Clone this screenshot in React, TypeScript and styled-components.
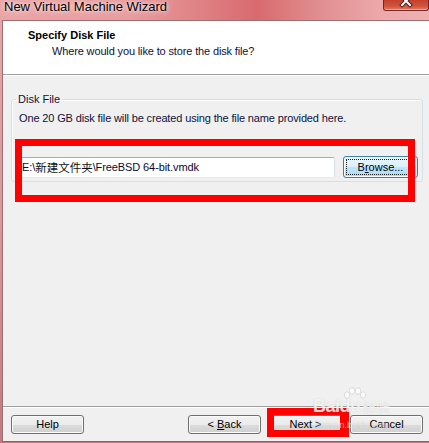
import React from "react";
import styled, { createGlobalStyle } from "styled-components";

const UI = `"Liberation Sans", "Noto Sans CJK SC", Arial, sans-serif`;

const Global = createGlobalStyle`
  html, body { margin: 0; padding: 0; background: #fff; }
  body { font-family: ${UI}; }
  * { box-sizing: border-box; }
`;

const Window = styled.div`
  position: relative;
  width: 429px;
  height: 443px;
  display: flex;
  flex-direction: column;
  padding-bottom: 1px;
  background: linear-gradient(180deg, #e9a6a8 0%, #dc979a 50%, #c27a80 100%);
  overflow: hidden;
  font-family: ${UI};
`;

const TitleBar = styled.div`
  height: 20px;
  flex: none;
  display: flex;
  align-items: flex-start;
  background: linear-gradient(
    90deg,
    #eba5a7 0%,
    #e89c9e 30%,
    #de7f83 48%,
    #d86a6e 60%,
    #e08d90 74%,
    #eca7a9 88%,
    #efb0b2 100%
  );
`;

const Title = styled.div`
  padding: 1px 0 0 4px;
  font-size: 13px;
  line-height: 12px;
  color: #000;
  text-shadow: 0 0 6px rgba(255, 255, 255, 0.9), 0 0 3px rgba(255, 255, 255, 0.7);
`;

const CloseButton = styled.div`
  margin-left: auto;
  width: 46px;
  height: 11px;
  border: 1px solid #6e2a2a;
  border-top: none;
  border-radius: 0 0 3px 3px;
  background: linear-gradient(180deg, #c4402e 0%, #d0533c 60%, #e07a5e 100%);
  box-shadow: inset 0 -1px 0 rgba(255, 200, 180, 0.6);
  display: flex;
  justify-content: center;
  overflow: hidden;
`;

const Client = styled.div`
  flex: 1;
  margin-left: 2px;
  display: flex;
  flex-direction: column;
  border-top: 1px solid #9a7072;
  border-left: 1px solid #9a7072;
  border-bottom: 1px solid #8a6064;
  background: #f0f0f0;
  min-height: 0;
`;

const Header = styled.div`
  flex: none;
  height: 54px;
  background: #fff;
  border-bottom: 1px solid #a0a0a0;
  padding: 8px 0 0 25px;
`;

const HeaderTitle = styled.div`
  font-size: 11px;
  line-height: 13px;
  font-weight: bold;
  color: #000;
`;

const HeaderSub = styled.div`
  margin-top: 3px;
  padding-left: 24px;
  font-size: 11px;
  line-height: 13px;
  letter-spacing: -0.14px;
  color: #10103a;
`;

const Body = styled.div`
  flex: 1;
  padding: 18px 6px 0 8px;
  box-shadow: inset 0 1px 0 #fff;
`;

const GroupBox = styled.fieldset`
  margin: 0;
  min-inline-size: 0;
  border: 1px solid #d5dfe5;
  border-radius: 3px;
  padding: 6px 4px 3px 7px;
  box-shadow: inset 1px 1px 0 #fff;
`;

const GroupLegend = styled.legend`
  margin-left: -3px;
  padding: 0 2px;
  font-size: 11px;
  line-height: 13px;
  color: #10103a;
`;

const Description = styled.div`
  font-size: 11px;
  line-height: 13px;
  letter-spacing: -0.14px;
  color: #10103a;
`;

const FileRow = styled.div`
  margin-top: 31px;
  height: 22px;
  display: flex;
  align-items: flex-start;
  gap: 8px;
`;

const TextBox = styled.div`
  flex: 1;
  margin-top: 1px;
  height: 21px;
  border: 1px solid;
  border-color: #abadb3 #dbdfe6 #e3e9ef #e2e3ea;
  border-radius: 2px;
  background: #fff;
  padding-left: 2px;
  display: flex;
  align-items: center;
  font-size: 11px;
  line-height: 19px;
  letter-spacing: -0.1px;
  color: #0a0a30;
  white-space: nowrap;
  overflow: hidden;
`;

const Cjk = styled.span`
  font-family: "Noto Sans CJK SC", sans-serif;
  font-size: 11.5px;
  letter-spacing: 0;
  color: #111;
`;

const Button = styled.div<{ $w?: number; $h?: number; $focused?: boolean }>`
  flex: none;
  width: ${(p) => p.$w ?? 73}px;
  height: ${(p) => p.$h ?? 19}px;
  border: 1px solid ${(p) => (p.$focused ? "#3c7fb1" : "#707070")};
  border-radius: 3px;
  background: ${(p) =>
    p.$focused
      ? "linear-gradient(180deg, #eaf6fd 0%, #d9f0fc 50%, #bee6fd 50%, #a7d9f5 100%)"
      : "linear-gradient(180deg, #f2f2f2 0%, #ebebeb 50%, #dddddd 50%, #cfcfcf 100%)"};
  box-shadow: inset 0 0 0 1px ${(p) => (p.$focused ? "#f2fbfe" : "#fbfbfb")};
  display: flex;
  align-items: center;
  justify-content: center;
  font-size: 11px;
  line-height: 13px;
  color: #000;
  position: relative;
`;

const FocusRect = styled.div`
  position: absolute;
  inset: 2px;
  border: 1px dotted #1a1a1a;
  border-radius: 1px;
  pointer-events: none;
`;

const Key = styled.span`
  text-decoration: underline;
  text-underline-offset: 1px;
`;

const Footer = styled.div`
  flex: none;
  height: 35px;
  border-top: 1px solid #a0a0a0;
  box-shadow: inset 0 1px 0 #fff;
  padding: 8px 6px 0 8px;
  display: flex;
  align-items: flex-start;
`;

const Spacer = styled.div`
  flex: 1;
`;

const ButtonGroup = styled.div`
  display: flex;
  gap: 8px;
`;

const Annotation = styled.div<{ $l: number; $t: number; $w: number; $h: number; $bw: string }>`
  position: absolute;
  left: ${(p) => p.$l}px;
  top: ${(p) => p.$t}px;
  width: ${(p) => p.$w}px;
  height: ${(p) => p.$h}px;
  border-style: solid;
  border-color: #ff0000;
  border-width: ${(p) => p.$bw};
  pointer-events: none;
`;

const Watermark = styled.div`
  position: absolute;
  left: 296px;
  top: 384px;
  width: 110px;
  height: 46px;
  pointer-events: none;
  color: rgba(255, 255, 255, 0.8);
  text-shadow: 0 0 1px rgba(120, 120, 120, 0.4);
`;

const WmLogo = styled.div`
  position: absolute;
  left: 17px;
  top: 13px;
  display: flex;
  align-items: flex-end;
  font-family: "Liberation Sans", Arial, sans-serif;
  font-weight: bold;
  font-size: 18px;
  line-height: 18px;
  letter-spacing: -0.5px;
`;

const WmCn = styled.span`
  margin-left: 2px;
  font-family: "Noto Sans CJK SC", sans-serif;
  font-weight: normal;
  font-size: 14px;
  line-height: 16px;
`;

const WmPaw = styled.svg`
  position: absolute;
  left: 46px;
  top: 3px;
`;

const WmUrl = styled.div`
  position: absolute;
  left: 20px;
  top: 36px;
  font-family: "Liberation Sans", Arial, sans-serif;
  font-size: 9px;
  line-height: 10px;
  color: rgba(255, 255, 255, 0.6);
`;

export default function App() {
  return (
    <>
      <Global />
      <Window>
        <TitleBar>
          <Title>New Virtual Machine Wizard</Title>
          <CloseButton>
            <svg width="14" height="8" viewBox="0 0 14 8">
              <path d="M3 -3 L11 5 M11 -3 L3 5" stroke="#5a1a1a" strokeWidth="4" strokeLinecap="square" />
              <path d="M3 -3 L11 5 M11 -3 L3 5" stroke="#ffffff" strokeWidth="2" strokeLinecap="square" />
            </svg>
          </CloseButton>
        </TitleBar>
        <Client>
          <Header>
            <HeaderTitle>Specify Disk File</HeaderTitle>
            <HeaderSub>Where would you like to store the disk file?</HeaderSub>
          </Header>
          <Body>
            <GroupBox>
              <GroupLegend>Disk File</GroupLegend>
              <Description>
                One 20 GB disk file will be created using the file name provided here.
              </Description>
              <FileRow>
                <TextBox>
                  E:\<Cjk>新建文件夹</Cjk>\FreeBSD 64-bit.vmdk
                </TextBox>
                <Button $w={75} $h={22} $focused>
                  <FocusRect />
                  <span>
                    B<Key>r</Key>owse...
                  </span>
                </Button>
              </FileRow>
            </GroupBox>
          </Body>
          <Footer>
            <Button>Help</Button>
            <Spacer />
            <ButtonGroup>
              <Button>
                <span>
                  &lt; <Key>B</Key>ack
                </span>
              </Button>
              <Button>Next &gt;</Button>
              <Button>Cancel</Button>
            </ButtonGroup>
          </Footer>
        </Client>
        <Annotation $l={15} $t={139} $w={400} $h={63} $bw="7px" />
        <Annotation $l={267} $t={408} $w={82} $h={29} $bw="7px 9px 7px 7px" />
        <Watermark>
          <WmPaw width="26" height="14" viewBox="0 0 26 14">
            <g fill="rgba(255,255,255,0.85)" stroke="rgba(130,130,130,0.4)" strokeWidth="0.6">
              <ellipse cx="5" cy="8" rx="2.6" ry="3.2" />
              <ellipse cx="10" cy="4" rx="2.6" ry="3.3" />
              <ellipse cx="16" cy="4" rx="2.6" ry="3.3" />
              <ellipse cx="21" cy="8" rx="2.6" ry="3.2" />
            </g>
          </WmPaw>
          <WmLogo>
            Baidu<WmCn>经验</WmCn>
          </WmLogo>
          <WmUrl>jingyan.baidu.com</WmUrl>
        </Watermark>
      </Window>
    </>
  );
}
